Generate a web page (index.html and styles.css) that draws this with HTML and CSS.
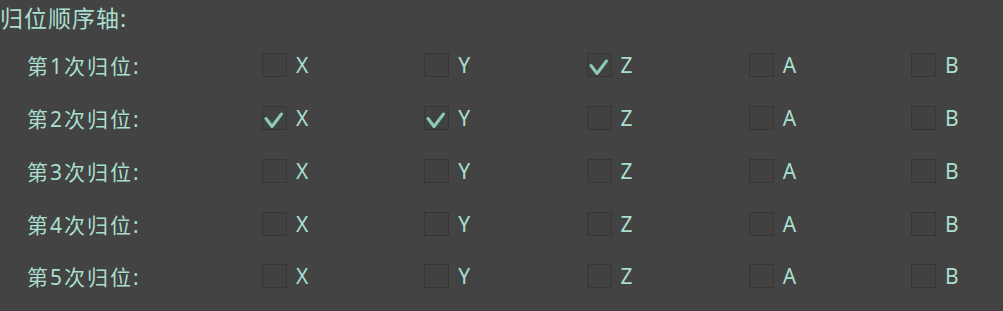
FILE: index.html
```html
<!DOCTYPE html>
<html>
<head>
<meta charset="utf-8">
<link rel="stylesheet" href="styles.css">
</head>
<body>
<div class="panel">
  <div class="title">归位顺序轴:</div>
  <div class="rows">
    <div class="row">
      <div class="label">第1次归位:</div>
      <div class="cell"><span class="box"></span><span class="axis">X</span></div>
      <div class="cell"><span class="box"></span><span class="axis">Y</span></div>
      <div class="cell"><span class="box checked"><svg viewBox="0 0 25 24"><polyline points="4,12.5 10,20.5 19.5,8"/></svg></span><span class="axis">Z</span></div>
      <div class="cell"><span class="box"></span><span class="axis">A</span></div>
      <div class="cell"><span class="box"></span><span class="axis">B</span></div>
    </div>
    <div class="row">
      <div class="label">第2次归位:</div>
      <div class="cell"><span class="box checked"><svg viewBox="0 0 25 24"><polyline points="4,12.5 10,20.5 19.5,8"/></svg></span><span class="axis">X</span></div>
      <div class="cell"><span class="box checked"><svg viewBox="0 0 25 24"><polyline points="4,12.5 10,20.5 19.5,8"/></svg></span><span class="axis">Y</span></div>
      <div class="cell"><span class="box"></span><span class="axis">Z</span></div>
      <div class="cell"><span class="box"></span><span class="axis">A</span></div>
      <div class="cell"><span class="box"></span><span class="axis">B</span></div>
    </div>
    <div class="row">
      <div class="label">第3次归位:</div>
      <div class="cell"><span class="box"></span><span class="axis">X</span></div>
      <div class="cell"><span class="box"></span><span class="axis">Y</span></div>
      <div class="cell"><span class="box"></span><span class="axis">Z</span></div>
      <div class="cell"><span class="box"></span><span class="axis">A</span></div>
      <div class="cell"><span class="box"></span><span class="axis">B</span></div>
    </div>
    <div class="row">
      <div class="label">第4次归位:</div>
      <div class="cell"><span class="box"></span><span class="axis">X</span></div>
      <div class="cell"><span class="box"></span><span class="axis">Y</span></div>
      <div class="cell"><span class="box"></span><span class="axis">Z</span></div>
      <div class="cell"><span class="box"></span><span class="axis">A</span></div>
      <div class="cell"><span class="box"></span><span class="axis">B</span></div>
    </div>
    <div class="row">
      <div class="label">第5次归位:</div>
      <div class="cell"><span class="box"></span><span class="axis">X</span></div>
      <div class="cell"><span class="box"></span><span class="axis">Y</span></div>
      <div class="cell"><span class="box"></span><span class="axis">Z</span></div>
      <div class="cell"><span class="box"></span><span class="axis">A</span></div>
      <div class="cell"><span class="box"></span><span class="axis">B</span></div>
    </div>
  </div>
</div>
</body>
</html>
```
FILE: styles.css
```css
html, body {
  margin: 0;
  padding: 0;
  background: #434343;
  overflow: hidden;
}
.panel {
  width: 1003px;
  height: 311px;
  font-family: "Noto Sans", "Noto Sans CJK SC", sans-serif;
  color: #a8dfcf;
  font-size: 21px;
}
.title {
  height: 39px;
  line-height: 36px;
  font-size: 23px;
  letter-spacing: 1px;
  padding-left: 0;
}
.row {
  display: grid;
  grid-template-columns: 235px repeat(4, 162.25px) auto;
  padding-left: 27px;
  height: 52.75px;
  align-items: center;
}
.label {
  letter-spacing: 2px;
}
.cell {
  display: flex;
  align-items: center;
  gap: 9px;
}
.box {
  width: 23px;
  height: 22px;
  border: 1px solid #363636;
  background: #414141;
  display: block;
  position: relative;
}
.box svg {
  position: absolute;
  left: -1px;
  top: -1px;
  width: 25px;
  height: 24px;
}
.box polyline {
  fill: none;
  stroke: #8ccab6;
  stroke-width: 3;
  stroke-linecap: round;
  stroke-linejoin: round;
}
.axis {
  line-height: 24px;
}
```
